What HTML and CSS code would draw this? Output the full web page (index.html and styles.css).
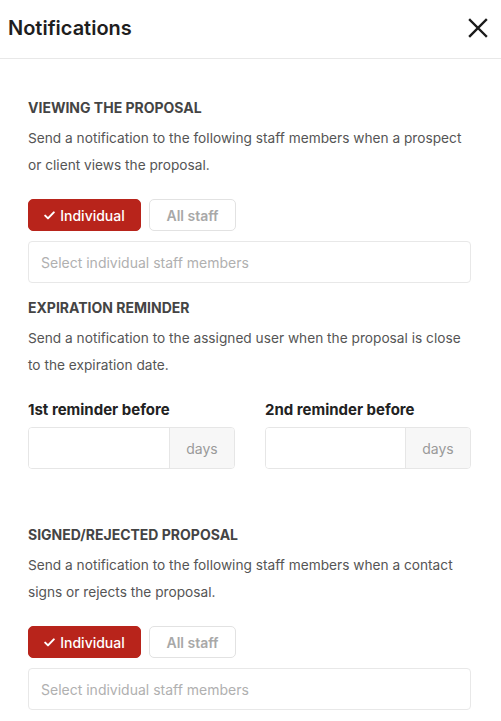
FILE: index.html
```html
<!DOCTYPE html>
<html lang="en">
<head>
<meta charset="utf-8">
<title>Notifications</title>
<link rel="stylesheet" href="styles.css">
</head>
<body>
<div class="panel">
  <header class="header">
    <h1 class="title">Notifications</h1>
    <button class="close" aria-label="Close">
      <svg width="20" height="20" viewBox="0 0 20 20"><path d="M2 2 L18 18 M18 2 L2 18" stroke="#1a1a1a" stroke-width="2.4" stroke-linecap="square" fill="none"/></svg>
    </button>
  </header>
  <main class="content">
    <section class="section">
      <h2 class="heading">VIEWING THE PROPOSAL</h2>
      <p class="desc">Send a notification to the following staff members when a prospect or client views the proposal.</p>
      <div class="toggle">
        <button class="btn btn-active"><svg class="check" width="11" height="9" viewBox="0 0 11 9"><path d="M1.2 4.6 L4 7.4 L9.8 1.4" stroke="#fff" stroke-width="2" fill="none" stroke-linecap="round" stroke-linejoin="round"/></svg>Individual</button>
        <button class="btn btn-off">All staff</button>
      </div>
      <div class="select">Select individual staff members</div>
    </section>
    <section class="section">
      <h2 class="heading">EXPIRATION REMINDER</h2>
      <p class="desc">Send a notification to the assigned user when the proposal is close to the expiration date.</p>
      <div class="reminders">
        <div class="field">
          <label class="label">1st reminder before</label>
          <div class="group"><div class="input"></div><div class="addon">days</div></div>
        </div>
        <div class="field">
          <label class="label">2nd reminder before</label>
          <div class="group"><div class="input"></div><div class="addon">days</div></div>
        </div>
      </div>
    </section>
    <section class="section section-spaced">
      <h2 class="heading">SIGNED/REJECTED PROPOSAL</h2>
      <p class="desc">Send a notification to the following staff members when a contact signs or rejects the proposal.</p>
      <div class="toggle">
        <button class="btn btn-active"><svg class="check" width="11" height="9" viewBox="0 0 11 9"><path d="M1.2 4.6 L4 7.4 L9.8 1.4" stroke="#fff" stroke-width="2" fill="none" stroke-linecap="round" stroke-linejoin="round"/></svg>Individual</button>
        <button class="btn btn-off">All staff</button>
      </div>
      <div class="select">Select individual staff members</div>
    </section>
  </main>
</div>
</body>
</html>
```
FILE: styles.css
```css
* { box-sizing: border-box; }
html, body { margin: 0; padding: 0; background: #fff; }
body { font-family: Inter, "Noto Sans", sans-serif; color: #222; overflow: hidden; }

.header {
  height: 59px;
  display: flex;
  align-items: center;
  justify-content: space-between;
  padding: 0 13px 0 8px;
  border-bottom: 1px solid #e8e8e8;
}
.title {
  margin: 0;
  font-size: 20px;
  line-height: 24px;
  font-weight: 600;
  color: #1e1e1e;
  padding-bottom: 2px;
}
.close {
  border: 0;
  background: none;
  padding: 0;
  width: 20px;
  height: 20px;
  display: flex;
  margin-bottom: 3px;
}

.content { padding: 39px 30px 0 28px; }

.section { display: flex; flex-direction: column; }
.section + .section { margin-top: 15px; }
.section-spaced.section-spaced { margin-top: 56px; }

.heading {
  margin: 0;
  font-size: 14px;
  line-height: 20px;
  font-weight: 700;
  color: #444;
}
.desc {
  margin: 7px 0 0;
  font-size: 13.7px;
  line-height: 27px;
  color: #555;
}

.toggle { display: flex; gap: 8px; margin-top: 20px; }
.btn {
  height: 32px;
  border-radius: 5px;
  font-family: Inter, sans-serif;
  font-size: 14px;
  font-weight: 500;
  padding: 0;
  display: flex;
  align-items: center;
  justify-content: center;
  white-space: nowrap;
}
.btn-active {
  width: 113px;
  background: #b8241b;
  border: 1px solid #b8241b;
  color: #fff;
  gap: 5px;
}
.check { display: block; }
.btn-off {
  width: 87px;
  background: #fff;
  border: 1px solid #e2e2e2;
  color: #a8a8a8;
  font-weight: 600;
}

.select {
  margin-top: 10px;
  height: 42px;
  border: 1px solid #e8e8e8;
  border-radius: 4px;
  padding: 0 12px;
  display: flex;
  align-items: center;
  font-size: 14px;
  color: #b0b0b0;
}

.reminders {
  display: grid;
  grid-template-columns: 207px 206px;
  column-gap: 30px;
  margin-top: 21px;
}
.field { display: flex; flex-direction: column; }
.label {
  font-size: 15px;
  line-height: 20px;
  font-weight: 700;
  color: #222;
}
.group {
  margin-top: 7px;
  height: 42px;
  display: flex;
  border: 1px solid #e6e6e6;
  border-radius: 4px;
  overflow: hidden;
}
.input { flex: 1; background: #fff; }
.addon {
  width: 65px;
  background: #f7f7f7;
  border-left: 1px solid #e6e6e6;
  display: flex;
  align-items: center;
  justify-content: center;
  font-size: 14px;
  color: #9a9a9a;
}
```
